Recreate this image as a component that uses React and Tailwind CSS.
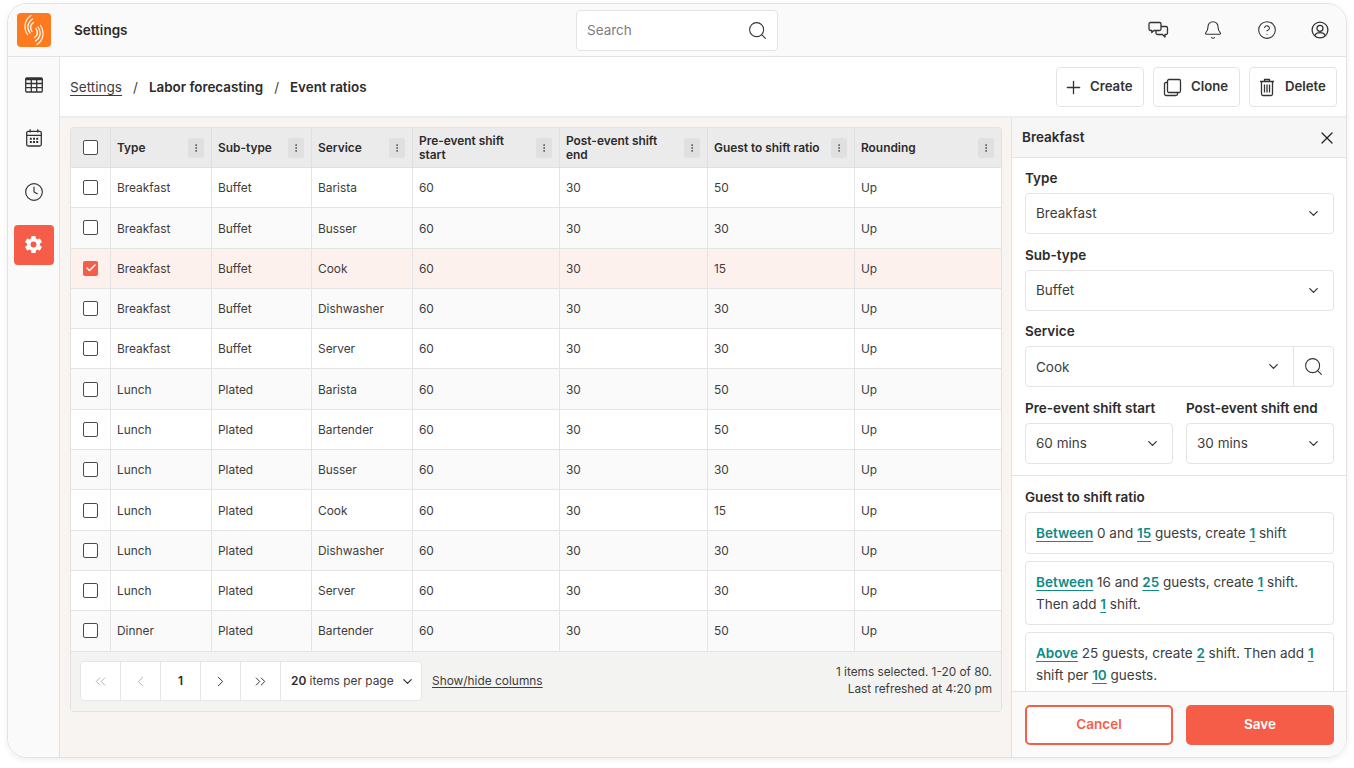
import React from 'react'
import { Bell, ChevronDown, ChevronLeft, ChevronRight, ChevronsLeft, ChevronsRight, CircleHelp, Clock, EllipsisVertical, Plus, Search, X, Check } from 'lucide-react'
import { IoSettingsSharp } from 'react-icons/io5'

const rows = [
    ['Breakfast', 'Buffet', 'Barista', 50],
    ['Breakfast', 'Buffet', 'Busser', 30],
    ['Breakfast', 'Buffet', 'Cook', 15],
    ['Breakfast', 'Buffet', 'Dishwasher', 30],
    ['Breakfast', 'Buffet', 'Server', 30],
    ['Lunch', 'Plated', 'Barista', 50],
    ['Lunch', 'Plated', 'Bartender', 50],
    ['Lunch', 'Plated', 'Busser', 30],
    ['Lunch', 'Plated', 'Cook', 15],
    ['Lunch', 'Plated', 'Dishwasher', 30],
    ['Lunch', 'Plated', 'Server', 30],
    ['Dinner', 'Plated', 'Bartender', 50],
]

const columns = [
    { label: 'Type', w: 'w-[101px]' },
    { label: 'Sub-type', w: 'w-[100px]' },
    { label: 'Service', w: 'w-[101px]' },
    { label: 'Pre-event shift start', w: 'w-[147px]' },
    { label: 'Post-event shift end', w: 'w-[148px]' },
    { label: 'Guest to shift ratio', w: 'w-[147px]' },
    { label: 'Rounding', w: 'flex-1' },
]

const Logo = () => (
    <div className="w-[34px] h-[34px] rounded-[4px] bg-[#fd7a1e]">
        <svg width="34" height="34" viewBox="0 0 34 34" fill="none" stroke="#fff" strokeLinecap="round" strokeWidth="1.300">
            <path d="M14 2.500C8.500 6 5.500 14 10.500 21.500" opacity="0.85" />
            <path d="M15.500 6C11 9 9 14 13 20" />
            <path d="M16.500 9.500C13.500 11.500 12.500 14.500 15 18.500" />
            <path d="M17.500 24.500C20.500 22.500 21.500 19.500 19 15.500" />
            <path d="M18.500 28C23 25 25 20 21 14" />
            <path d="M20 31.500C25.500 28 28.500 20 23.500 12.500" opacity="0.85" />
        </svg>
    </div>
)

const GridIcon = () => (
    <svg width="20" height="20" viewBox="0 0 20 20" fill="none" stroke="#333" strokeWidth="1.300">
        <rect x="1.700" y="3" width="16.600" height="14" rx="1" />
        <path d="M1.700 4.200H18.300" strokeWidth="2.200" />
        <path d="M1.700 8.500H18.300M1.700 12.700H18.300M7.300 4V17M12.700 4V17" />
    </svg>
)

const CalendarIcon = () => (
    <svg width="20" height="20" viewBox="0 0 20 20" fill="none" stroke="#333" strokeWidth="1.300">
        <rect x="2.700" y="3.300" width="14.600" height="14.700" rx="1.500" />
        <path d="M2.700 7.300H17.300M6.200 1.300V4.500M13.800 1.300V4.500" />
        <path d="M5.800 9.800h2v2h-2zM9 9.800h2v2H9zM12.200 9.800h2v2h-2zM5.800 13h2v2h-2zM9 13h2v2H9zM12.200 13h2v2h-2z" fill="#333" stroke="none" />
    </svg>
)

const ChatIcon = () => (
    <svg width="21" height="21" viewBox="0 0 21 21" fill="none" stroke="#333" strokeWidth="1.300" strokeLinejoin="round">
        <path d="M2.500 2.500H11.500a1.500 1.500 0 0 1 1.500 1.500v5a1.500 1.500 0 0 1-1.500 1.500H6L3.800 12.500V10.500H2.500A1.500 1.500 0 0 1 1 9V4a1.500 1.500 0 0 1 1.500-1.500Z" />
        <path d="M13 6.500h5a1.500 1.500 0 0 1 1.500 1.500v5a1.500 1.500 0 0 1-1.500 1.500H17v2.500L14.500 14.500H9.500A1.500 1.500 0 0 1 8 13v-2.500" />
    </svg>
)

const UserIcon = () => (
    <svg width="18" height="18" viewBox="0 0 18 18" fill="none" stroke="#333" strokeWidth="1.300">
        <circle cx="9" cy="9" r="7.900" />
        <circle cx="9" cy="7.300" r="3" />
        <path d="M3.800 14.500C5 12 7 11.700 9 11.700s4 .3 5.200 2.800" />
    </svg>
)

const CloneIcon = () => (
    <svg width="19" height="19" viewBox="0 0 19 19" fill="none" stroke="#333" strokeWidth="1.300">
        <rect x="4.500" y="1.500" width="13" height="13" rx="1.500" />
        <path d="M4.500 4.500H3a1.500 1.500 0 0 0-1.500 1.500V16a1.500 1.500 0 0 0 1.500 1.500H13a1.500 1.500 0 0 0 1.500-1.500V14.500" />
    </svg>
)

const TrashIcon = () => (
    <svg width="18" height="20" viewBox="0 0 18 20" fill="none" stroke="#333" strokeWidth="1.300" strokeLinejoin="round">
        <path d="M2 4.500H16M6.500 4.500V2.500H11.500V4.500" />
        <path d="M3.500 4.500V17a1.500 1.500 0 0 0 1.500 1.500h8a1.500 1.500 0 0 0 1.500-1.500V4.500" />
        <path d="M6.500 7.500V15.500M9 7.500V15.500M11.500 7.500V15.500" />
    </svg>
)

const CheckBox = ({ checked }) => (
    checked ? (
        <div className="w-[15px] h-[15px] rounded-[2px] bg-[#f65d48] flex items-center justify-center">
            <Check size={12} strokeWidth={3} color="#fff" />
        </div>
    ) : (
        <div className="w-[15px] h-[15px] rounded-[2px] border-[1.5px] border-[#4b4b4b] bg-white"></div>
    )
)

const ActionButton = ({ icon, label, className }) => (
    <button className={`${className} h-10 flex items-center justify-start bg-white border border-[#e4e4e4] rounded-[4px] text-[13.200px] font-semibold text-[#333]`}>
        {icon}
        {label}
    </button>
)

const SelectBox = ({ value, className }) => (
    <div className={`h-[41px] bg-white border border-[#e4e4e4] rounded-[4px] flex items-center justify-between pl-[10px] pr-[12px] text-[13.500px] text-[#3d3d3d] ${className}`}>
        {value}
        <ChevronDown size={15} color="#333" />
    </div>
)

const Field = ({ label, children, className }) => (
    <div className={className}>
        <div className="text-[13.500px] font-semibold text-[#2b2b2b] leading-[17px] mb-[6px] whitespace-nowrap">{label}</div>
        {children}
    </div>
)

const Hl = ({ children }) => (
    <span className="text-[#0f8a86] font-semibold underline underline-offset-[3px] decoration-[#0f8a86]">{children}</span>
)

const PageButton = ({ children }) => (
    <div className="w-10 h-full border-r border-[#e6e6e6] flex items-center justify-center">{children}</div>
)

const App = () => {
    return (
        <div className="w-full h-screen bg-white pt-[3px] px-[7px] pb-[10px] text-[#3d3d3d] font-['Inter',sans-serif]">
            <div className="h-full flex flex-col overflow-hidden rounded-[20px] border border-[#e2e2e2] shadow-[0_2px_6px_rgba(0,0,0,0.07)]">

                {/* top bar */}
                <header className="h-[53px] shrink-0 bg-[#fafafa] border-b border-[#e2e2e2] flex items-center relative pl-[9px]">
                    <Logo />
                    <span className="ml-[23px] text-[13.500px] font-semibold text-[#2b2b2b]">Settings</span>
                    <div className="absolute left-[568px] top-[6px] w-[202px] h-[41px] bg-white border border-[#e4e4e4] rounded-[4px] flex items-center justify-between pl-[10px] pr-[9px]">
                        <span className="text-[13.500px] text-[#7d7d7d]">Search</span>
                        <Search size={21} strokeWidth={1.200} color="#333" />
                    </div>
                    <div className="ml-auto flex items-center gap-[34px] pr-[17px]">
                        <ChatIcon />
                        <Bell size={20} strokeWidth={1.300} color="#333" />
                        <CircleHelp size={20} strokeWidth={1.300} color="#333" />
                        <UserIcon />
                    </div>
                </header>

                <div className="flex-1 flex min-h-0">

                    {/* left rail */}
                    <aside className="w-[52px] shrink-0 bg-[#fafafa] border-r border-[#e2e2e2] flex flex-col items-center pt-2 gap-[13.300px]">
                        <div className="w-10 h-10 flex items-center justify-center"><GridIcon /></div>
                        <div className="w-10 h-10 flex items-center justify-center"><CalendarIcon /></div>
                        <div className="w-10 h-10 flex items-center justify-center"><Clock size={20} strokeWidth={1.400} color="#333" /></div>
                        <div className="w-10 h-10 rounded-[4px] bg-[#f65d48] flex items-center justify-center"><IoSettingsSharp size={19} color="#fff" /></div>
                    </aside>

                    <div className="flex-1 flex flex-col min-w-0">

                        {/* breadcrumb */}
                        <div className="h-[61px] shrink-0 bg-white border-b-2 border-[#eeeeee] flex items-center pt-px pl-[10px] pr-[9px]">
                            <span className="text-[13.600px] text-[#3d3d3d] underline underline-offset-[3px]">Settings</span>
                            <span className="mx-[11px] text-[13.500px]">/</span>
                            <span className="text-[13.400px] font-semibold text-[#2b2b2b]">Labor forecasting</span>
                            <span className="mx-[11px] text-[13.500px]">/</span>
                            <span className="text-[13.400px] font-semibold text-[#2b2b2b]">Event ratios</span>
                            <div className="ml-auto flex gap-[9px]">
                                <ActionButton className="w-[88px] pl-[6px] gap-[6px]" label="Create" icon={<Plus size={21} strokeWidth={1.500} color="#333" />} />
                                <ActionButton className="w-[87px] pl-[9px] gap-[9px]" label="Clone" icon={<CloneIcon />} />
                                <ActionButton className="w-[88px] pl-[8px] gap-[9px]" label="Delete" icon={<TrashIcon />} />
                            </div>
                        </div>

                        <div className="flex-1 flex min-h-0">

                            {/* table */}
                            <main className="flex-1 min-w-0 bg-[#f8f4f1] pt-[9px] pl-[10px] pr-[9px]">
                                <div className="border border-[#e2e2e2] rounded-[4px] overflow-hidden">
                                    <div className="h-10 flex bg-[#ebebeb] border-b border-[#e0e0e0]">
                                        <div className="w-10 shrink-0 flex items-center justify-center border-r border-[#e0e0e0]"><CheckBox /></div>
                                        {columns.map((c) => (
                                            <div key={c.label} className={`${c.w} shrink-0 flex items-center justify-between pl-[6px] pr-[7px] border-r last:border-r-0 last:shrink border-[#e0e0e0]`}>
                                                <span className="text-[11.900px] font-semibold leading-[14px] text-[#2b2b2b] max-w-[110px]">{c.label}</span>
                                                <div className="w-4 h-5 shrink-0 rounded-[3px] bg-[#e0e0e0] flex items-center justify-center">
                                                    <EllipsisVertical size={10} color="#444" />
                                                </div>
                                            </div>
                                        ))}
                                    </div>
                                    {rows.map((r, i) => (
                                        <div key={i} className={`h-[40.300px] flex border-b border-[#e4e4e4] text-[11.900px] ${i === 2 ? 'bg-[#fdf1ed]' : i % 2 ? 'bg-[#fafafa]' : 'bg-white'}`}>
                                            <div className="w-10 shrink-0 flex items-center justify-center border-r border-[#e4e4e4]"><CheckBox checked={i === 2} /></div>
                                            {[r[0], r[1], r[2], 60, 30, r[3], 'Up'].map((v, j) => (
                                                <div key={j} className={`${columns[j].w} shrink-0 last:shrink flex items-center pl-[6px] pt-px border-r last:border-r-0 border-[#e4e4e4]`}>{v}</div>
                                            ))}
                                        </div>
                                    ))}
                                    <div className="h-[59px] bg-[#f3f3f2] flex items-center px-[9px]">
                                        <div className="h-10 flex bg-white border border-[#e6e6e6] rounded-[4px]">
                                            <PageButton><ChevronsLeft size={17} strokeWidth={1.300} color="#aaa" /></PageButton>
                                            <PageButton><ChevronLeft size={17} strokeWidth={1.300} color="#aaa" /></PageButton>
                                            <PageButton><span className="text-[11.900px] font-semibold text-[#2b2b2b]">1</span></PageButton>
                                            <PageButton><ChevronRight size={17} strokeWidth={1.400} color="#333" /></PageButton>
                                            <PageButton><ChevronsRight size={17} strokeWidth={1.400} color="#333" /></PageButton>
                                            <div className="w-[140px] flex items-center justify-between pl-[10px] pr-[6px] text-[11.900px] whitespace-nowrap">
                                                <span><b className="font-semibold text-[#2b2b2b]">20</b> items per page</span>
                                                <ChevronDown size={15} color="#333" />
                                            </div>
                                        </div>
                                        <span className="ml-[10px] text-[11.900px] underline underline-offset-2">Show/hide columns</span>
                                        <div className="ml-auto text-right text-[11.800px] leading-[17px]">
                                            <div>1 items selected. 1-20 of 80.</div>
                                            <div>Last refreshed at 4:20 pm</div>
                                        </div>
                                    </div>
                                </div>
                            </main>

                            {/* side panel */}
                            <aside className="w-[335px] shrink-0 bg-white border-l border-[#e2e2e2] flex flex-col min-h-0">
                                <div className="h-10 shrink-0 bg-[#f6f6f6] border-b border-[#e4e4e4] flex items-center justify-between pl-[10px] pr-[9px]">
                                    <span className="text-[13.500px] font-semibold text-[#2b2b2b]">Breakfast</span>
                                    <X size={20} strokeWidth={1.500} color="#222" />
                                </div>
                                <div className="flex-1 min-h-0 overflow-hidden">
                                    <div className="pl-[13px] pr-[12px] pt-[12px] flex flex-col gap-[12.700px] border-b border-[#e4e4e4] pb-[11px]">
                                        <Field label="Type"><SelectBox value="Breakfast" /></Field>
                                        <Field label="Sub-type"><SelectBox value="Buffet" /></Field>
                                        <Field label="Service">
                                            <div className="flex h-[41px] bg-white border border-[#e4e4e4] rounded-[4px]">
                                                <div className="flex-1 flex items-center justify-between pl-[10px] pr-[12px] text-[13.500px]">
                                                    Cook
                                                    <ChevronDown size={15} color="#333" />
                                                </div>
                                                <div className="w-10 border-l border-[#e4e4e4] flex items-center justify-center"><Search size={21} strokeWidth={1.200} color="#333" /></div>
                                            </div>
                                        </Field>
                                        <div className="flex gap-[13px]">
                                            <Field label="Pre-event shift start" className="flex-1"><SelectBox value="60 mins" /></Field>
                                            <Field label="Post-event shift end" className="flex-1"><SelectBox value="30 mins" /></Field>
                                        </div>
                                    </div>
                                    <div className="pl-[13px] pr-[12px] pt-[13px]">
                                        <div className="text-[13.500px] font-semibold text-[#2b2b2b] leading-[17px] mb-[6px]">Guest to shift ratio</div>
                                        <div className="flex flex-col gap-[7px] text-[13.500px] leading-[22px]">
                                            <div className="border border-[#e4e4e4] rounded-[4px] px-[10px] py-[9px]">
                                                <Hl>Between</Hl> 0 and <Hl>15</Hl> guests, create <Hl>1</Hl> shift
                                            </div>
                                            <div className="border border-[#e4e4e4] rounded-[4px] px-[10px] py-[9px]">
                                                <Hl>Between</Hl> 16 and <Hl>25</Hl> guests, create <Hl>1</Hl> shift. Then add <Hl>1</Hl> shift.
                                            </div>
                                            <div className="border border-[#e4e4e4] rounded-[4px] px-[10px] py-[9px]">
                                                <Hl>Above</Hl> 25 guests, create <Hl>2</Hl> shift. Then add <Hl>1</Hl> shift per <Hl>10</Hl> guests.
                                            </div>
                                        </div>
                                    </div>
                                </div>
                                <div className="h-[66px] shrink-0 bg-[#fafafa] border-t border-[#e4e4e4] flex items-center justify-between pl-[13px] pr-[12px]">
                                    <button className="w-[148px] h-10 rounded-[5px] bg-white border-2 border-[#f65d48] text-[13.500px] font-semibold text-[#f65d48]">Cancel</button>
                                    <button className="w-[148px] h-10 rounded-[5px] bg-[#f65d48] text-[13.500px] font-semibold text-white">Save</button>
                                </div>
                            </aside>
                        </div>
                    </div>
                </div>
            </div>
        </div>
    )
}

export default App
